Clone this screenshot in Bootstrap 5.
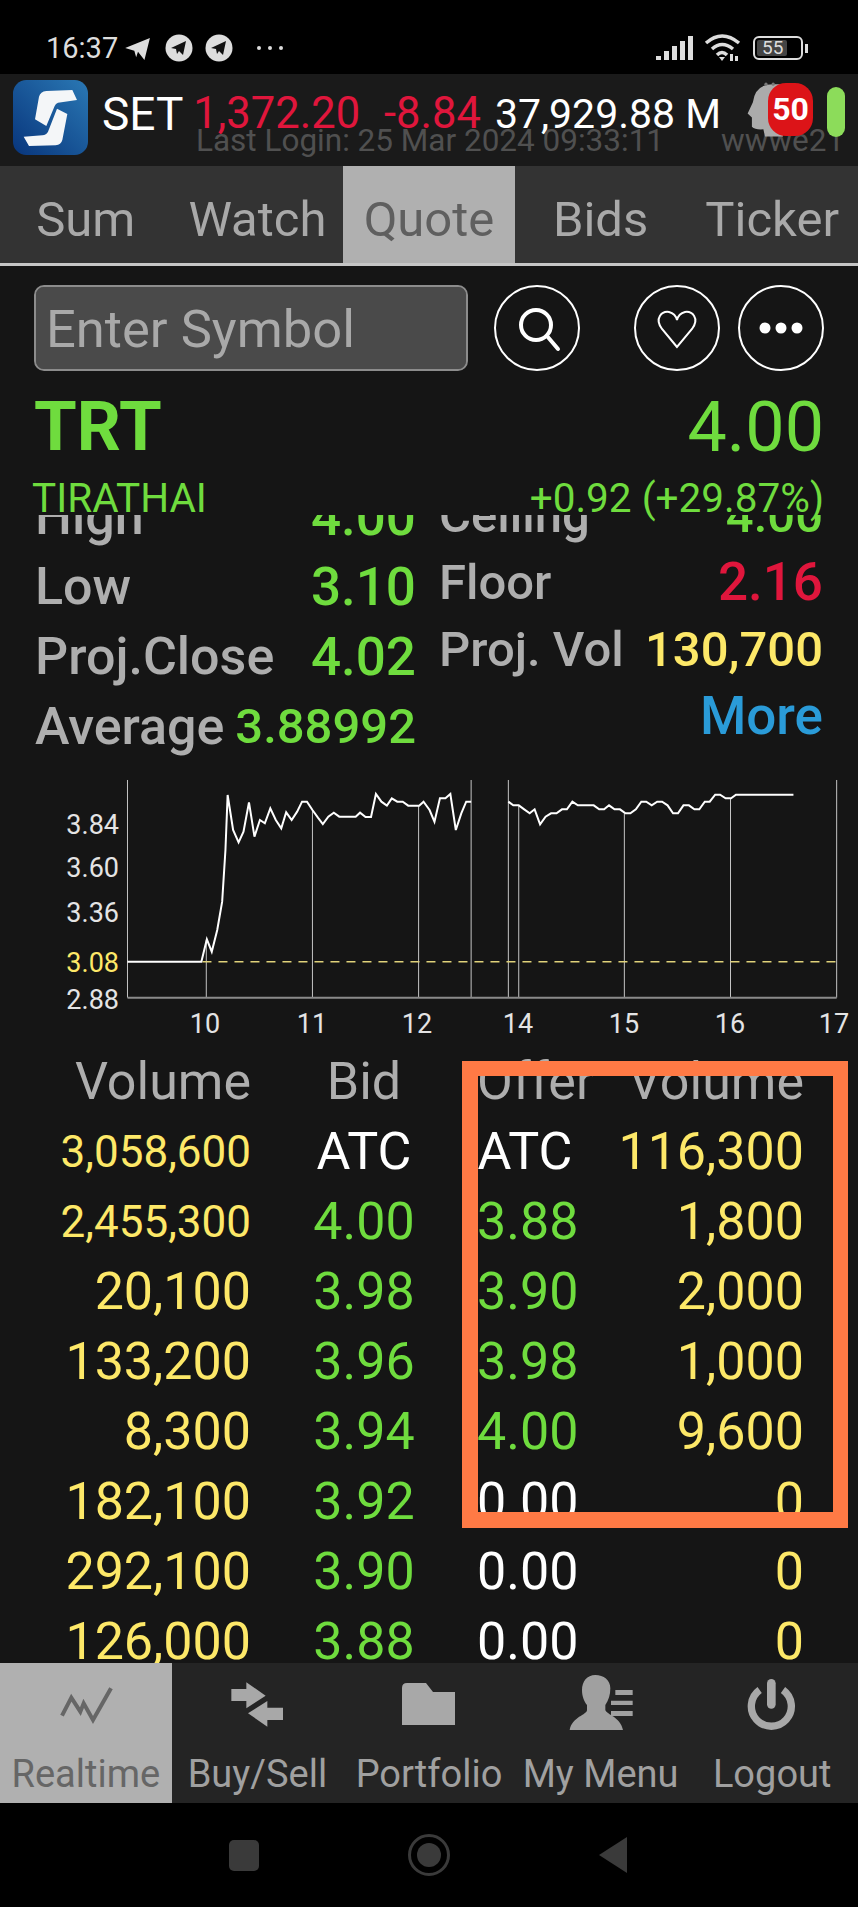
<!DOCTYPE html>
<html lang="en">
  <head>
    <meta charset="UTF-8" />
    <title>SET Quote</title>
    <link
      href="https://cdn.jsdelivr.net/npm/bootstrap@5.3.0/dist/css/bootstrap.min.css"
      rel="stylesheet"
    />
    <style>
      body {
        background-color: #151515;
        font-family: Roboto, "Liberation Sans", sans-serif;
        color: #fff;
      }
      .app {
        width: 858px;
        height: 1907px;
      }
      .c-green { color: #6fdc3e; }
      .c-red { color: #e0163c; }
      .c-yellow { color: #fde868; }
      .c-gray { color: #aeaeae; }
      .c-white { color: #fff; }

      /* status bar */
      .status-bar {
        height: 74px;
        background-color: #000;
        padding: 34px 50px 0 46px;
        color: #ddd;
      }
      .status-time {
        font-size: 29px;
        line-height: 28px;
        margin-right: 7px;
      }
      .st-plane { margin-top: 4px; margin-right: 14px; }
      .st-circle { margin-right: 12px; }
      .st-dots { margin-top: 10px; margin-left: 10px; }
      .st-signal { margin-top: 2px; margin-right: 10px; }
      .st-wifi { margin-right: 11px; }
      .batt {
        width: 50px;
        height: 24px;
        margin-top: 2px;
        border: 2px solid #ddd;
        border-radius: 6px;
        padding: 2px;
        font-size: 19px;
        line-height: 16px;
      }
      .batt-fill {
        width: 30px;
        background-color: #444;
        border-radius: 2px;
        padding-left: 5px;
      }
      .batt-nub {
        width: 3px;
        height: 9px;
        background-color: #ddd;
        margin-left: 2px;
        margin-top: 10px;
      }

      /* index header */
      .index-bar {
        height: 92px;
        background-color: #1a1a1a;
        padding: 6px 0 0 13px;
      }
      .app-logo {
        width: 75px;
        height: 75px;
        flex: none;
        margin-right: 14px;
      }
      .index-main {
        padding-top: 12px;
        font-size: 43.5px;
        line-height: 44px;
        height: 49px;
        white-space: nowrap;
      }
      .index-main span { height: 37px; }
      .idx-name { font-size: 46px; margin-right: 10px; }
      .idx-last { margin-right: 24px; }
      .idx-chg { margin-right: 14px; }
      .idx-val { font-size: 41px; }
      .index-sub {
        font-size: 31.5px;
        line-height: 24px;
        color: #505050;
        white-space: nowrap;
        margin-left: 94px;
      }
      .index-user {
        margin-left: 57px;
      }
      .head-ico {
        position: absolute;
        left: 747px;
        top: 8px;
      }
      .alert-count {
        position: absolute;
        left: 768px;
        top: 9px;
        width: 45px;
        height: 53px;
        border-radius: 18px;
        background-color: #dc1418;
        font-size: 32px;
        font-weight: 700;
        line-height: 53px;
        text-align: center;
      }
      .conn-pill {
        position: absolute;
        left: 827px;
        top: 13px;
        width: 18px;
        height: 50px;
        border-radius: 9px;
        background-color: #8cdc5a;
      }

      /* top tabs */
      .top-tabs {
        height: 100px;
        flex-wrap: nowrap;
        background-color: #333;
        border-bottom: 3px solid #c6c6c6;
      }
      .top-tabs .nav-link {
        padding: 10px 0 0;
        height: 97px;
        font-size: 49px;
        line-height: 87px;
        color: #a9a9a9;
      }
      .top-tabs .nav-link.active {
        background-color: #b0b0b0;
        color: #5f5f5f;
      }

      /* search row */
      .search-row {
        padding: 19px 34px 0;
      }
      .search-row .form-control {
        width: 434px;
        height: 86px;
        flex: none;
        padding: 2px 10px 0;
        margin-right: 26px;
        background-color: #4a4a4a;
        border: 2px solid #8c8c8c;
        border-radius: 10px;
        font-size: 52.5px;
        color: #fff;
      }
      .search-row .form-control::placeholder {
        color: #a9a9a9;
        opacity: 1;
      }
      .round-btn {
        width: 86px;
        height: 86px;
        flex: none;
        padding: 0;
        border: 2px solid #fff;
        border-radius: 50%;
        background: transparent;
        line-height: 0;
      }
      .gap-heart { margin-left: 54px; margin-right: 18px; }

      /* quote summary */
      .quote-top {
        padding: 11px 34px 0;
        height: 101px;
        font-size: 70px;
        line-height: 90px;
      }
      .quote-top .fw-bold { font-size: 69px; }
      .quote-sub {
        padding: 5px 34px 0 32px;
        height: 43px;
        font-size: 40.5px;
        line-height: 43px;
      }
      .stats {
        height: 255px;
        padding-left: 35px;
        font-weight: 500;
      }
      .stats-left {
        width: 381px;
        margin-top: -33px;
        margin-right: 23px;
        font-size: 52px;
        line-height: 70px;
      }
      .stats-left .c-green { font-size: 53px; }
      .stats-left .avg-val { font-size: 49px; }
      .stats-right {
        width: 384px;
        margin-top: -33px;
        font-size: 49px;
        line-height: 67px;
      }
      .stats-right .val-big { font-size: 53px; }
      .more-link {
        color: #2a9bd8;
        font-size: 53px;
        text-decoration: none;
      }

      /* chart */
      .chart-box {
        display: block;
        flex: none;
      }
      .chart-box text {
        font-family: Roboto, "Liberation Sans", sans-serif;
        font-size: 27px;
        fill: #e4e4e4;
      }
      .chart-box .ref-label { fill: #fde868; }
      .chart-box line,
      .chart-box polyline {
        vector-effect: non-scaling-stroke;
        fill: none;
      }

      /* bids and offers */
      .depth {
        height: 616px;
      }
      .depth-row {
        display: grid;
        grid-template-columns: 251px 226px 96px 231px;
        height: 70px;
        font-size: 52px;
        line-height: 70px;
      }
      .depth-row > :nth-child(1),
      .depth-row > :nth-child(4) { text-align: right; }
      .depth-row > :nth-child(2),
      .depth-row > :nth-child(3) { text-align: center; }
      .vol-sm { font-size: 44px; }
      .mark-box {
        position: absolute;
        left: 462px;
        top: 14px;
        width: 386px;
        height: 467px;
        border: solid #ff7a45;
        border-width: 15px 15px 16px 16px;
      }

      /* bottom nav */
      .bottom-tabs {
        height: 140px;
        flex-wrap: nowrap;
        background-color: #242424;
      }
      .bottom-tabs .nav-link {
        height: 140px;
        padding: 7px 0 0;
        font-size: 38px;
        line-height: 36px;
        color: #a0a0a0;
        white-space: nowrap;
      }
      .bottom-tabs .nav-link.active {
        background-color: #b0b0b0;
        color: #666;
      }
      .bottom-tabs svg {
        display: block;
        margin: 0 auto 26px;
      }
      .sys-nav {
        height: 104px;
        background-color: #000;
        gap: 125px;
      }
    </style>
  </head>
  <body class="m-0">
    <div class="app d-flex flex-column overflow-hidden">
      <div class="status-bar d-flex align-items-start">
        <span class="status-time">16:37</span>
        <svg class="st-plane" width="26" height="22" viewBox="0 0 28 24">
          <path fill="#ddd" d="M0 11 27 0 21 24 14 15 12 21 10 14Z" />
        </svg>
        <svg class="st-circle" width="28" height="28" viewBox="0 0 28 28">
          <circle cx="14" cy="14" r="13.5" fill="#ddd" />
          <path fill="#111" d="M6 14 21 7 18 21 14 17 12 20 11 15Z" />
        </svg>
        <svg class="st-circle" width="28" height="28" viewBox="0 0 28 28">
          <circle cx="14" cy="14" r="13.5" fill="#ddd" />
          <path fill="#111" d="M6 14 21 7 18 21 14 17 12 20 11 15Z" />
        </svg>
        <svg class="st-dots" width="30" height="8" viewBox="0 0 30 8">
          <circle cx="4" cy="4" r="2" fill="#ddd" />
          <circle cx="15" cy="4" r="2" fill="#ddd" />
          <circle cx="26" cy="4" r="2" fill="#ddd" />
        </svg>
        <svg class="st-signal ms-auto" width="38" height="24" viewBox="0 0 38 24">
          <path fill="#ddd" d="M0 20h5v4H0zM8 15h5v9H8zM16 10h5v14h-5zM24 5h5v19h-5zM32 0h5v24h-5z" />
        </svg>
        <svg class="st-wifi" width="38" height="28" viewBox="0 0 38 28">
          <g fill="none" stroke="#ddd" stroke-width="3.5">
            <path d="M2 9Q18 -5 35 9" />
            <path d="M8 15Q18 6 29 15" />
            <path d="M13 21Q18 16 23 21" />
          </g>
          <path fill="#ddd" d="M15 23h6l-3 4zM26 20h3v7h-3zM31 22h3v5h-3z" />
        </svg>
        <div class="batt d-flex">
          <div class="batt-fill">55</div>
        </div>
        <div class="batt-nub"></div>
      </div>

      <div class="index-bar d-flex position-relative">
        <svg class="app-logo" viewBox="40 150 225 225">
          <defs>
            <linearGradient id="logoBg" x1="1" y1="0" x2="0" y2="1">
              <stop offset="0" stop-color="#2a78b4" />
              <stop offset="1" stop-color="#08357c" />
            </linearGradient>
          </defs>
          <rect x="40" y="150" width="225" height="225" rx="40" fill="url(#logoBg)" />
          <path fill="#f4f6f8" d="M118 200Q122 185 140 183L218 180 232 210 175 218Q168 220 165 228L140 288 106 268Z" />
          <path fill="#f4f6f8" d="M172 236 203 252 188 330Q184 345 168 346L88 348 72 320 128 316Q140 315 145 305Z" />
        </svg>
        <div>
          <div class="index-main d-flex">
            <span class="c-white idx-name">SET</span>
            <span class="c-red idx-last">1,372.20</span>
            <span class="c-red idx-chg">-8.84</span>
            <span class="c-white idx-val">37,929.88 M</span>
          </div>
          <div class="index-sub">
            <span>Last Login: 25 Mar 2024 09:33:11</span><span class="index-user">wwwe21</span>
          </div>
        </div>
        <svg class="head-ico" width="36" height="55" viewBox="320 155 110 165">
          <path fill="#ababab" d="M400 160Q345 160 338 215L322 250 335 262 335 290Q345 300 370 298L375 320H430V160Z" />
          <circle cx="378" cy="160" r="5" fill="#777" />
          <circle cx="400" cy="160" r="5" fill="#777" />
        </svg>
        <div class="alert-count">50</div>
        <div class="conn-pill"></div>
      </div>

      <nav class="top-tabs nav nav-justified">
        <a class="nav-link" href="#">Sum</a>
        <a class="nav-link" href="#">Watch</a>
        <a class="nav-link active" href="#">Quote</a>
        <a class="nav-link" href="#">Bids</a>
        <a class="nav-link" href="#">Ticker</a>
      </nav>

      <div class="search-row d-flex">
        <input class="form-control" type="text" placeholder="Enter Symbol" />
        <button class="round-btn" type="button">
          <svg width="82" height="82" viewBox="2 2 82 82">
            <circle cx="42" cy="40" r="15" fill="none" stroke="#fff" stroke-width="4" />
            <path d="M53 51 64 64" stroke="#fff" stroke-width="4" stroke-linecap="round" />
          </svg>
        </button>
        <button class="round-btn gap-heart" type="button">
          <svg width="82" height="82" viewBox="2 2 82 82">
            <path fill="none" stroke="#fff" stroke-width="2" d="M43 62 28 44C20 33 28 26 35 27 39 28 42 31 43 35 44 31 47 28 51 27 58 26 66 33 58 44Z" />
          </svg>
        </button>
        <button class="round-btn" type="button">
          <svg width="82" height="82" viewBox="2 2 82 82">
            <circle cx="27" cy="43" r="5.5" fill="#fff" />
            <circle cx="43" cy="43" r="5.5" fill="#fff" />
            <circle cx="59" cy="43" r="5.5" fill="#fff" />
          </svg>
        </button>
      </div>

      <div class="quote-top d-flex justify-content-between c-green">
        <span class="fw-bold">TRT</span>
        <span>4.00</span>
      </div>
      <div class="quote-sub d-flex justify-content-between c-green">
        <span>TIRATHAI</span>
        <span>+0.92 (+29.87%)</span>
      </div>

      <div class="stats d-flex overflow-hidden">
        <div class="stats-left">
          <div class="d-flex justify-content-between">
            <span class="c-gray">High</span><span class="c-green">4.00</span>
          </div>
          <div class="d-flex justify-content-between">
            <span class="c-gray">Low</span><span class="c-green">3.10</span>
          </div>
          <div class="d-flex justify-content-between">
            <span class="c-gray">Proj.Close</span><span class="c-green">4.02</span>
          </div>
          <div class="d-flex justify-content-between">
            <span class="c-gray">Average</span><span class="c-green avg-val">3.88992</span>
          </div>
        </div>
        <div class="stats-right">
          <div class="d-flex justify-content-between">
            <span class="c-gray">Ceiling</span><span class="c-green">4.00</span>
          </div>
          <div class="d-flex justify-content-between">
            <span class="c-gray">Floor</span><span class="c-red val-big">2.16</span>
          </div>
          <div class="d-flex justify-content-between">
            <span class="c-gray">Proj. Vol</span><span class="c-yellow">130,700</span>
          </div>
          <div class="d-flex justify-content-end">
            <a class="more-link" href="#">More</a>
          </div>
        </div>
      </div>

      <svg class="chart-box" width="858" height="277" viewBox="0 0 858 277">
        <text x="119" y="64" text-anchor="end">3.84</text>
        <text x="119" y="107" text-anchor="end">3.60</text>
        <text x="119" y="152" text-anchor="end">3.36</text>
        <text x="119" y="202" text-anchor="end" class="ref-label">3.08</text>
        <text x="119" y="239" text-anchor="end">2.88</text>
        <text x="205" y="263" text-anchor="middle">10</text>
        <text x="312" y="263" text-anchor="middle">11</text>
        <text x="417" y="263" text-anchor="middle">12</text>
        <text x="518" y="263" text-anchor="middle">14</text>
        <text x="624" y="263" text-anchor="middle">15</text>
        <text x="730" y="263" text-anchor="middle">16</text>
        <text x="834" y="263" text-anchor="middle">17</text>
        <g transform="scale(0.5472 0.3333)">
          <g stroke="#c4c4c4" stroke-width="1">
            <line x1="233" y1="30" x2="233" y2="683" />
            <line x1="377" y1="510" x2="377" y2="683" />
            <line x1="571" y1="120" x2="571" y2="683" />
            <line x1="765" y1="107" x2="765" y2="683" />
            <line x1="861" y1="30" x2="861" y2="683" />
            <line x1="929" y1="30" x2="929" y2="683" />
            <line x1="948" y1="106" x2="948" y2="683" />
            <line x1="1141" y1="130" x2="1141" y2="683" />
            <line x1="1335" y1="85" x2="1335" y2="683" />
            <line x1="1529" y1="30" x2="1529" y2="683" />
          </g>
          <line x1="233" y1="683" x2="1529" y2="683" stroke="#8a8a8a" stroke-width="2" />
          <line x1="370" y1="575" x2="1529" y2="575" stroke="#e0d27a" stroke-width="1.5" stroke-dasharray="9 7" />
          <polyline stroke="#fff" stroke-width="2" points="233,575 368,575 378,508 387,545 397,480 406,395 412,240 416,75 426,180 436,217 445,185 455,97 465,200 475,150 484,160 494,115 504,150 514,175 523,127 533,150 543,125 552,95 561,95 571,120 581,143 590,162 600,140 610,128 620,140 650,140 658,128 668,141 678,141 687,72 697,95 707,107 716,85 726,95 736,95 746,107 766,107 774,95 785,120 794,155 804,85 814,85 823,72 833,180 843,130 852,95 861,95" />
          <polyline stroke="#fff" stroke-width="2" points="929,95 938,106 948,106 958,118 968,130 977,118 987,163 997,140 1007,130 1017,130 1027,118 1036,118 1046,95 1056,106 1085,106 1095,118 1104,118 1113,106 1123,118 1133,118 1143,130 1152,130 1162,118 1172,95 1181,95 1191,106 1201,95 1210,95 1220,106 1230,130 1239,130 1249,106 1259,106 1269,118 1278,118 1288,95 1297,95 1307,74 1316,74 1326,85 1336,85 1345,74 1450,74" />
        </g>
      </svg>

      <div class="depth position-relative overflow-hidden">
        <div class="depth-row c-gray">
          <span>Volume</span><span>Bid</span><span>Offer</span><span>Volume</span>
        </div>
        <div class="depth-row">
          <span class="c-yellow vol-sm">3,058,600</span><span class="c-white">ATC</span><span class="c-white">ATC</span><span class="c-yellow">116,300</span>
        </div>
        <div class="depth-row">
          <span class="c-yellow vol-sm">2,455,300</span><span class="c-green">4.00</span><span class="c-green">3.88</span><span class="c-yellow">1,800</span>
        </div>
        <div class="depth-row">
          <span class="c-yellow">20,100</span><span class="c-green">3.98</span><span class="c-green">3.90</span><span class="c-yellow">2,000</span>
        </div>
        <div class="depth-row">
          <span class="c-yellow">133,200</span><span class="c-green">3.96</span><span class="c-green">3.98</span><span class="c-yellow">1,000</span>
        </div>
        <div class="depth-row">
          <span class="c-yellow">8,300</span><span class="c-green">3.94</span><span class="c-green">4.00</span><span class="c-yellow">9,600</span>
        </div>
        <div class="depth-row">
          <span class="c-yellow">182,100</span><span class="c-green">3.92</span><span class="c-white">0.00</span><span class="c-yellow">0</span>
        </div>
        <div class="depth-row">
          <span class="c-yellow">292,100</span><span class="c-green">3.90</span><span class="c-white">0.00</span><span class="c-yellow">0</span>
        </div>
        <div class="depth-row">
          <span class="c-yellow">126,000</span><span class="c-green">3.88</span><span class="c-white">0.00</span><span class="c-yellow">0</span>
        </div>
        <div class="mark-box"></div>
      </div>

      <nav class="bottom-tabs nav nav-justified">
        <a class="nav-link active" href="#">
          <svg width="120" height="60" viewBox="77 15 360 180">
            <polyline points="185,152 213,98 240,140 250,115 278,165 332,70" fill="none" stroke="#666" stroke-width="12" />
          </svg>
          Realtime
        </a>
        <a class="nav-link" href="#">
          <svg width="120" height="60" viewBox="592 15 360 180">
            <path fill="#a8a8a8" d="M695 72H740V52L798 92 740 130V108H695Z" />
            <path fill="#a8a8a8" d="M850 128H803V108L745 145 803 185V165H850Z" />
          </svg>
          Buy/Sell
        </a>
        <a class="nav-link" href="#">
          <svg width="120" height="60" viewBox="0 0 120 60">
            <path fill="#a8a8a8" d="M33 18Q33 13 38 13H57L64 22H86V55H33Z" />
          </svg>
          Portfolio
        </a>
        <a class="nav-link" href="#">
          <svg width="120" height="60" viewBox="302 15 360 180">
            <path fill="#a0a0a0" d="M465 30C440 30 425 50 425 75 425 95 432 110 440 120V135C440 150 395 155 388 195H548C540 155 500 150 495 135V120C505 105 510 90 510 70 510 45 490 30 465 30Z" />
            <path fill="#a0a0a0" d="M525 75H577V90H525ZM512 107H577V120H512ZM512 138H577V153H512Z" />
          </svg>
          My Menu
        </a>
        <a class="nav-link" href="#">
          <svg width="120" height="60" viewBox="817 15 360 180">
            <path fill="none" stroke="#a8a8a8" stroke-width="22" d="M960 75A60 60 0 1 0 1030 75" />
            <path stroke="#a8a8a8" stroke-width="26" stroke-linecap="round" d="M995 55V118" />
          </svg>
          Logout
        </a>
      </nav>

      <div class="sys-nav d-flex align-items-center justify-content-center">
        <svg width="60" height="60" viewBox="0 0 60 60">
          <rect x="15" y="15" width="30" height="31" rx="5" fill="#3a3a3a" />
        </svg>
        <svg width="60" height="60" viewBox="0 0 60 60">
          <circle cx="30" cy="30" r="19.5" fill="none" stroke="#3a3a3a" stroke-width="3" />
          <circle cx="30" cy="30" r="12" fill="#3a3a3a" />
        </svg>
        <svg width="60" height="60" viewBox="0 0 60 60">
          <path fill="#3a3a3a" d="M15 30 43 12V48Z" />
        </svg>
      </div>
    </div>
  </body>
</html>
